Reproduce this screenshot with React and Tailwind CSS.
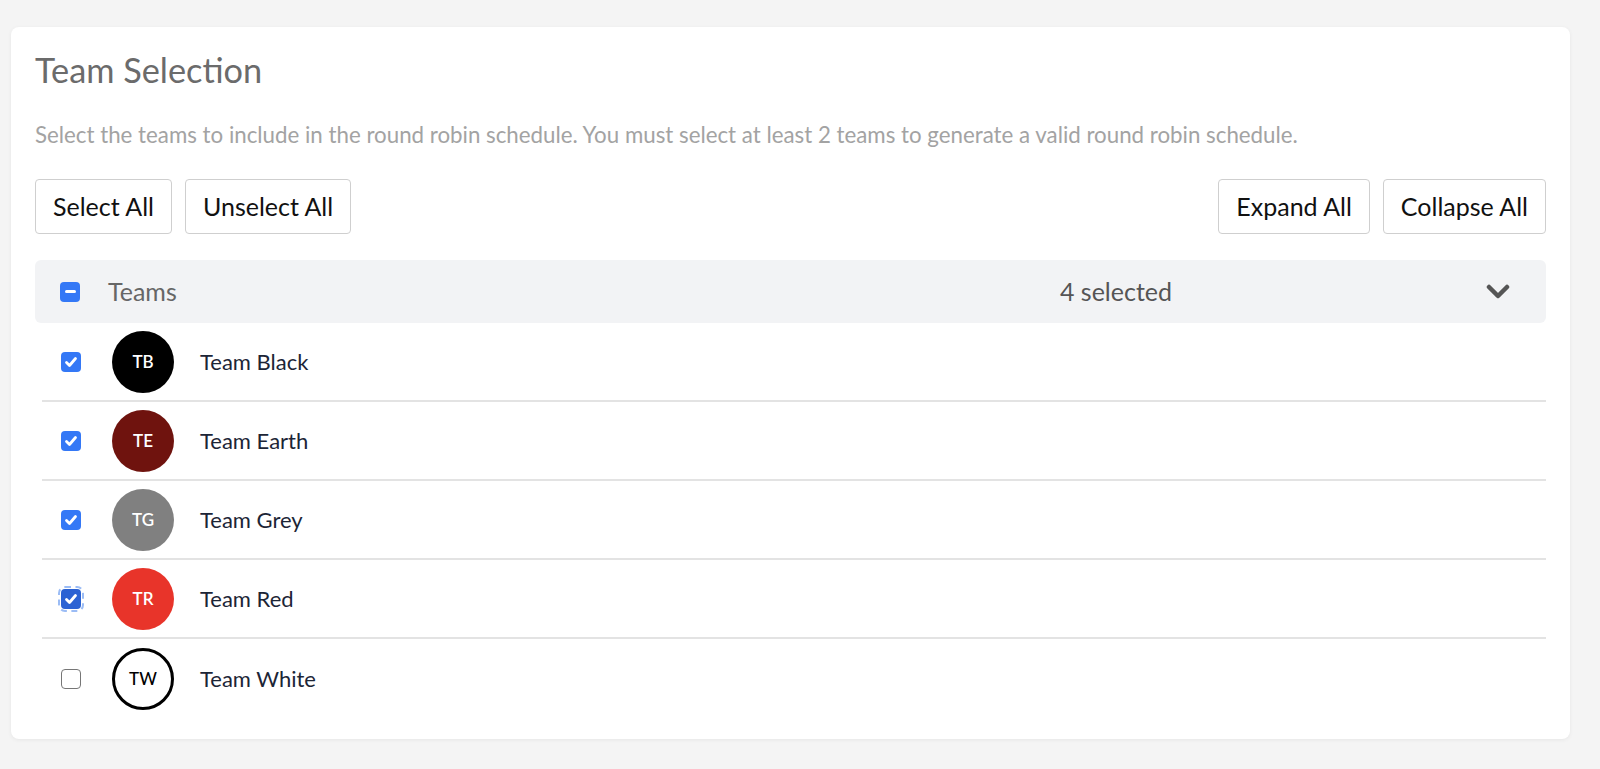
import React from "react";

const teams = [
  { code: "TB", name: "Team Black", color: "bg-black text-white font-semibold", checked: true },
  { code: "TE", name: "Team Earth", color: "bg-[#6f130e] text-white font-semibold", checked: true },
  { code: "TG", name: "Team Grey", color: "bg-[#808080] text-white font-semibold", checked: true },
  { code: "TR", name: "Team Red", color: "bg-[#e8342a] text-white font-semibold", checked: true, focus: true },
  { code: "TW", name: "Team White", color: "bg-white text-black font-medium border-[3px] border-black", checked: false },
];

const CheckBox = ({ checked, focus }) => {
  if (!checked) {
    return <div className="w-[20px] h-[20px] rounded-[4px] border-[1.5px] border-[#767676] bg-white" />;
  }
  return (
    <div
      className={`w-[20px] h-[20px] rounded-[4px] flex items-center justify-center ${
        focus ? "bg-[#2b62d3] outline-2 outline-dashed outline-[#9bbcf5] outline-offset-1" : "bg-[#3478f6]"
      }`}
    >
      <svg width="14" height="14" viewBox="0 0 14 14" fill="none">
        <path d="M2.5 7.5 L5.5 10.5 L11.5 3.5" stroke="white" strokeWidth="2.8" strokeLinecap="round" strokeLinejoin="round" />
      </svg>
    </div>
  );
};

const Button = ({ children }) => (
  <button className="h-[55px] px-[17px] border border-[#cfcfcf] rounded-[4px] bg-white text-[25px] text-[#111] leading-none">
    {children}
  </button>
);

const App = () => {
  return (
    <div
      className="min-h-screen bg-[#f4f4f4] pl-[11px] pt-[27px] pb-[30px]"
      style={{ fontFamily: "Lato, 'Noto Sans', sans-serif" }}
    >
      <div className="w-[1559px] bg-white rounded-[8px] shadow-[0_1px_4px_rgba(0,0,0,0.06)] px-6 pt-[21px] pb-[21px]">
        <h1 className="text-[34.3px] leading-[44px] text-[#6b6b6b] font-normal">Team Selection</h1>
        <p className="mt-[29px] text-[22.3px] leading-[28px] text-[#a3a3a3]">
          Select the teams to include in the round robin schedule. You must select at least 2 teams to generate a valid round robin schedule.
        </p>

        <div className="mt-[30px] flex items-center justify-between">
          <div className="flex gap-[13px]">
            <Button>Select All</Button>
            <Button>Unselect All</Button>
          </div>
          <div className="flex gap-[13px]">
            <Button>Expand All</Button>
            <Button>Collapse All</Button>
          </div>
        </div>

        <div className="mt-[26px] h-[63px] bg-[#f2f3f5] rounded-[6px] flex items-center pl-[25px] pr-[36px]">
          <div className="w-[20px] h-[20px] rounded-[4px] bg-[#3478f6] flex items-center justify-center">
            <div className="w-[11px] h-[3px] bg-white rounded-sm" />
          </div>
          <span className="ml-[28px] text-[25px] text-[#666]">Teams</span>
          <span className="ml-auto text-[25px] text-[#555]">4 selected</span>
          <svg className="ml-[314px]" width="24" height="16" viewBox="0 0 24 16" fill="none">
            <path d="M3 3 L12 12 L21 3" stroke="#555" strokeWidth="4.5" strokeLinecap="round" strokeLinejoin="round" />
          </svg>
        </div>

        <div>
          {teams.map((t, i) => (
            <div
              key={t.code}
              className={`h-[79px] flex items-center ${
                i < teams.length - 1 ? "border-b-2 border-[#e3e3e3] ml-[7px] pl-[19px]" : "pl-[26px]"
              }`}
            >
              <CheckBox checked={t.checked} focus={t.focus} />
              <div
                className={`ml-[31px] w-[62px] h-[62px] rounded-full flex items-center justify-center text-[17px] ${t.color}`}
              >
                {t.code}
              </div>
              <span className="ml-[26px] text-[22px] text-[#1c2536]">{t.name}</span>
            </div>
          ))}
        </div>
      </div>
    </div>
  );
};

export default App;
